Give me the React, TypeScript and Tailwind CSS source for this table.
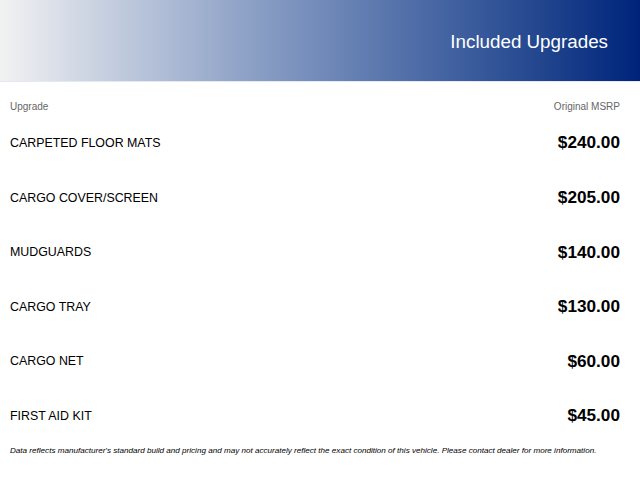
const items = [
  { name: "CARPETED FLOOR MATS", price: "$240.00" },
  { name: "CARGO COVER/SCREEN", price: "$205.00" },
  { name: "MUDGUARDS", price: "$140.00" },
  { name: "CARGO TRAY", price: "$130.00" },
  { name: "CARGO NET", price: "$60.00" },
  { name: "FIRST AID KIT", price: "$45.00" },
];

export default function App() {
  return (
    <div
      className="w-[640px] h-[480px] bg-white overflow-hidden"
      style={{ fontFamily: '"Liberation Sans", Arial, sans-serif' }}
    >
      <div className="h-[82px] flex items-center justify-end pr-[32px] pt-[3px] bg-gradient-to-r from-[#f2f2f2] to-[#00237a] border-b border-[#e4e8f0]">
        <h1 className="text-white text-[18.8px] font-normal">Included Upgrades</h1>
      </div>

      <div className="pl-[10px] pr-[20px]">
        <div className="flex justify-between items-center h-[34px] pt-[14px] text-[10px] text-[#666]">
          <div>Upgrade</div>
          <div>Original MSRP</div>
        </div>
        {items.map((it) => (
          <div key={it.name} className="flex justify-between items-center h-[54.6px]">
            <div className="text-[12.4px] text-black">{it.name}</div>
            <div className="text-[17.2px] font-bold text-black">{it.price}</div>
          </div>
        ))}
        <div className="text-[8.1px] italic text-black mt-[1px]">
          Data reflects manufacturer's standard build and pricing and may not accurately
          reflect the exact condition of this vehicle. Please contact dealer for more information.
        </div>
      </div>
    </div>
  );
}
